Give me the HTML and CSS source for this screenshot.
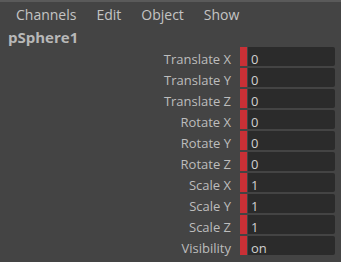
FILE: index.html
```html
<!DOCTYPE html>
<html>
<head>
<meta charset="utf-8">
<link rel="stylesheet" href="styles.css">
</head>
<body>
<div class="box">
  <div class="menu">
    <span class="item">Channels</span>
    <span class="item">Edit</span>
    <span class="item">Object</span>
    <span class="item">Show</span>
  </div>
  <div class="node">pSphere1</div>
  <div class="channels">
    <div class="row"><span class="label">Translate X</span><span class="key"></span><span class="field">0</span></div>
    <div class="row"><span class="label">Translate Y</span><span class="key"></span><span class="field">0</span></div>
    <div class="row"><span class="label">Translate Z</span><span class="key"></span><span class="field">0</span></div>
    <div class="row"><span class="label">Rotate X</span><span class="key"></span><span class="field">0</span></div>
    <div class="row"><span class="label">Rotate Y</span><span class="key"></span><span class="field">0</span></div>
    <div class="row"><span class="label">Rotate Z</span><span class="key"></span><span class="field">0</span></div>
    <div class="row"><span class="label">Scale X</span><span class="key"></span><span class="field">1</span></div>
    <div class="row"><span class="label">Scale Y</span><span class="key"></span><span class="field">1</span></div>
    <div class="row"><span class="label">Scale Z</span><span class="key"></span><span class="field">1</span></div>
    <div class="row"><span class="label">Visibility</span><span class="key"></span><span class="field">on</span></div>
  </div>
</div>
</body>
</html>
```
FILE: styles.css
```css
html, body {
  margin: 0;
  padding: 0;
  background: #444444;
}
.box {
  width: 341px;
  height: 262px;
  box-sizing: border-box;
  border-top: 2px solid #5a5a5a;
  background: #444444;
  font-family: "Open Sans", "DejaVu Sans", sans-serif;
  overflow: hidden;
}
.menu {
  display: flex;
  gap: 20px;
  padding-left: 16px;
  height: 24px;
  align-items: center;
  font-size: 14px;
  color: #c4c4c4;
}
.node {
  padding-left: 8px;
  height: 21px;
  line-height: 22px;
  font-size: 15px;
  font-weight: bold;
  color: #b8b8b8;
}
.channels {
  display: flex;
  flex-direction: column;
  gap: 2px;
}
.row {
  display: grid;
  grid-template-columns: 231px 9px 7px 1px 87px;
  grid-template-rows: 19px;
  height: 19px;
}
.label,
.field {
  box-sizing: border-box;
  height: 19px;
  padding-top: 3px;
  font-size: 13px;
  line-height: 19px;
}
.label {
  grid-column: 1;
  text-align: right;
  color: #bdbdbd;
}
.key {
  grid-column: 3;
  background: #c93036;
}
.field {
  grid-column: 5;
  background: #2b2b2b;
  border-radius: 0 2px 2px 0;
  padding-left: 3px;
  color: #d0d0d0;
}
```
